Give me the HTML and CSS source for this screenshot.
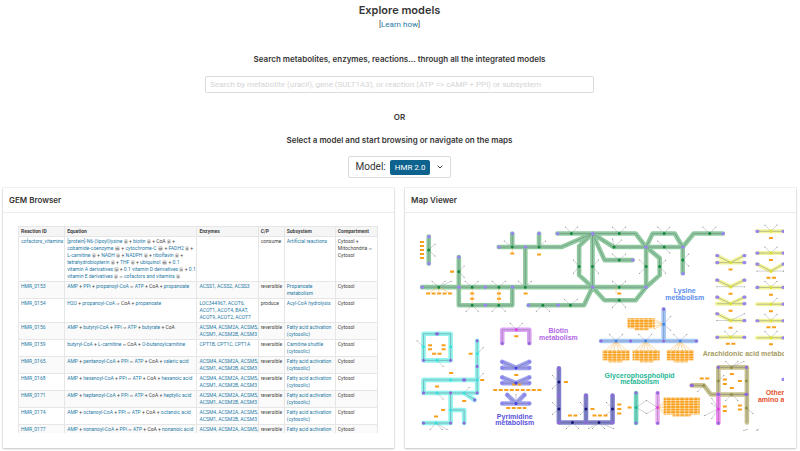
FILE: index.html
```html
<!DOCTYPE html>
<html lang="en">
<head>
<meta charset="utf-8">
<title>Explore models</title>
<link rel="stylesheet" href="styles.css">
</head>
<body>
<main class="page">
  <header class="intro">
    <h1>Explore models</h1>
    <p class="learn">[<a href="#">Learn how</a>]</p>
    <label class="lead" for="search">Search metabolites, enzymes, reactions... through all the integrated models</label>
    <input class="search" id="search" type="text" placeholder="Search by metabolite (uracil), gene (SULT1A3), or reaction (ATP =&gt; cAMP + PPi) or subsystem">
    <p class="or">OR</p>
    <p class="select-text">Select a model and start browsing or navigate on the maps</p>
    <button class="model" type="button" aria-haspopup="listbox">
      <span>Model:</span><span class="tag">HMR 2.0</span>
      <svg class="chevron" viewBox="0 0 6 4" aria-hidden="true"><path d="M.7.7 3 3 5.3.7"/></svg>
    </button>
  </header>

  <div class="cards">
    <section class="card">
      <h2>GEM Browser</h2>
      <div class="table-view">
        <table>
          <colgroup><col class="c-id"><col class="c-eq"><col class="c-enz"><col class="c-cp"><col class="c-sub"><col class="c-comp"></colgroup>
          <thead><tr><th>Reaction ID</th><th>Equation</th><th>Enzymes</th><th>C/P</th><th>Subsystem</th><th>Compartment</th></tr></thead>
          <tbody>
            <tr><td><a href="#">cofactors_vitamins</a></td><td><a href="#">[protein]-N6-(lipoyl)lysine</a> <i>c</i> + <a href="#">biotin</a> <i>c</i> + CoA <i>c</i> +<br><a href="#">cobamide-coenzyme</a> <i>m</i> + <a href="#">cytochrome-C</a> <i>m</i> + <a href="#">FADH2</a> <i>c</i> +<br><a href="#">L-carnitine</a> <i>c</i> + <a href="#">NADH</a> <i>c</i> + <a href="#">NADPH</a> <i>c</i> + <a href="#">riboflavin</a> <i>c</i> +<br><a href="#">tetrahydrobiopterin</a> <i>c</i> + <a href="#">THF</a> <i>c</i> + <a href="#">ubiquinol</a> <i>m</i> + <a href="#">0.1<br>vitamin A derivatives</a> <i>c</i> + <a href="#">0.1 vitamin D derivatives</a> <i>c</i> + <a href="#">0.1<br>vitamin E derivatives</a> <i>c</i> <b>⇒</b> <a href="#">cofactors and vitamins</a> <i>c</i></td><td></td><td>consume</td><td><a href="#">Artificial reactions</a></td><td>Cytosol +<br>Mitochondria <b>⇒</b><br>Cytosol</td></tr>
            <tr><td><a href="#">HMR_0153</a></td><td><a href="#">AMP</a> + <a href="#">PPi</a> + <a href="#">propanoyl-CoA</a> <b>⇔</b> <a href="#">ATP</a> + CoA + <a href="#">propanoate</a></td><td><a href="#">ACSS1, ACSS2, ACSS3</a></td><td>reversible</td><td><a href="#">Propanoate<br>metabolism</a></td><td>Cytosol</td></tr>
            <tr><td><a href="#">HMR_0154</a></td><td><a href="#">H2O</a> + <a href="#">propanoyl-CoA</a> <b>⇒</b> CoA + <a href="#">propanoate</a></td><td><a href="#">LOC344967, ACOT6,<br>ACOT1, ACOT4, BAAT,<br>ACOT9, ACOT2, ACOT7</a></td><td>produce</td><td><a href="#">Acyl-CoA hydrolysis</a></td><td>Cytosol</td></tr>
            <tr><td><a href="#">HMR_0156</a></td><td><a href="#">AMP</a> + <a href="#">butyryl-CoA</a> + <a href="#">PPi</a> <b>⇔</b> <a href="#">ATP</a> + <a href="#">butyrate</a> + CoA</td><td><a href="#">ACSM4, ACSM2A, ACSM5,<br>ACSM1, ACSM2B, ACSM3</a></td><td>reversible</td><td><a href="#">Fatty acid activation<br>(cytosolic)</a></td><td>Cytosol</td></tr>
            <tr><td><a href="#">HMR_0159</a></td><td><a href="#">butyryl-CoA</a> + <a href="#">L-carnitine</a> <b>⇔</b> CoA + <a href="#">O-butanoylcarnitine</a></td><td><a href="#">CPT1B, CPT1C, CPT1A</a></td><td>reversible</td><td><a href="#">Carnitine shuttle<br>(cytosolic)</a></td><td>Cytosol</td></tr>
            <tr><td><a href="#">HMR_0165</a></td><td><a href="#">AMP</a> + <a href="#">pentanoyl-CoA</a> + <a href="#">PPi</a> <b>⇔</b> <a href="#">ATP</a> + CoA + <a href="#">valeric acid</a></td><td><a href="#">ACSM4, ACSM2A, ACSM5,<br>ACSM1, ACSM2B, ACSM3</a></td><td>reversible</td><td><a href="#">Fatty acid activation<br>(cytosolic)</a></td><td>Cytosol</td></tr>
            <tr><td><a href="#">HMR_0168</a></td><td><a href="#">AMP</a> + <a href="#">hexanoyl-CoA</a> + <a href="#">PPi</a> <b>⇔</b> <a href="#">ATP</a> + CoA + <a href="#">hexanoic acid</a></td><td><a href="#">ACSM4, ACSM2A, ACSM5,<br>ACSM1, ACSM2B, ACSM3</a></td><td>reversible</td><td><a href="#">Fatty acid activation<br>(cytosolic)</a></td><td>Cytosol</td></tr>
            <tr><td><a href="#">HMR_0171</a></td><td><a href="#">AMP</a> + <a href="#">heptanoyl-CoA</a> + <a href="#">PPi</a> <b>⇔</b> <a href="#">ATP</a> + CoA + <a href="#">heptylic acid</a></td><td><a href="#">ACSM4, ACSM2A, ACSM5,<br>ACSM1, ACSM2B, ACSM3</a></td><td>reversible</td><td><a href="#">Fatty acid activation<br>(cytosolic)</a></td><td>Cytosol</td></tr>
            <tr><td><a href="#">HMR_0174</a></td><td><a href="#">AMP</a> + <a href="#">octanoyl-CoA</a> + <a href="#">PPi</a> <b>⇔</b> <a href="#">ATP</a> + CoA + <a href="#">octanoic acid</a></td><td><a href="#">ACSM4, ACSM2A, ACSM5,<br>ACSM1, ACSM2B, ACSM3</a></td><td>reversible</td><td><a href="#">Fatty acid activation<br>(cytosolic)</a></td><td>Cytosol</td></tr>
            <tr><td><a href="#">HMR_0177</a></td><td><a href="#">AMP</a> + <a href="#">nonanoyl-CoA</a> + <a href="#">PPi</a> <b>⇔</b> <a href="#">ATP</a> + CoA + <a href="#">nonanoic acid</a></td><td><a href="#">ACSM4, ACSM2A, ACSM5,</a></td><td>reversible</td><td><a href="#">Fatty acid activation</a></td><td>Cytosol</td></tr>
          </tbody>
        </table>
      </div>
    </section>

    <section class="card">
      <h2>Map Viewer</h2>
      <div class="map-view">
      <svg class="map" viewBox="413 224 370 206" role="img" aria-label="Metabolic map">
        <defs>
          <marker id="dot" markerUnits="userSpaceOnUse" markerWidth="2" markerHeight="2" refX="1" refY="1"><circle cx="1" cy="1" r=".5" fill="#777"/></marker>
          <pattern id="genes" patternUnits="userSpaceOnUse" width="4.5" height="2.6"><rect width="4.1" height="2.1" rx=".4" fill="#f8a01c"/></pattern>
          <path id="p-green" d="M428.7 236.5V263.5M422 287H645.5M458.7 257V305H512V287M525 287V247M498.5 247H561L592 233.5M512 233.5V247M538.7 233.5V247M557 233.5H635L645.5 247M592 233.5 578.7 246V275L592 287M592 233.5V287M592 233.5 604 260H632M592 233.5 613 247H682M645.5 247 652 233.5H674L682 247 693 233.5H722M682 247V273M645.5 247V287M645.5 247 659 258V275L645.5 287M592 287 604 300H635L645.5 287M528.3 305H583.5L592 287"/>
          <path id="p-yellow" d="M716 255.5 729.7 262.5 743.5 255.5M716 262.5H743.5M716 280 729.7 286.5 743.5 280M716 297 729.7 303.5 743.5 297M716 303.5H743.5M716 313.5 729.7 320.3H743.5M716 337H743.5M756 231.3H782.5M756 253H782.5M756 264 770 271 782.5 264M756 287.3H782.5M756 304H782.5M756 320.5H782.5M756 337.5H782.5"/>
          <path id="p-cyan" d="M423.5 333.5H450.5V360H423.5ZM477 340.5V392.5H423.5V379.5H477M464 392.5 474.5 399.5M450.5 392.5V422.5H423.5M450.5 409.5H464V422.5"/>
          <path id="p-biotin" d="M502 343V329.5H529V343"/>
          <path id="p-pyr" d="M502 361.5 515.7 367.5 529 361.5M502 367.5H529M502 377 515.7 382.7 529 377M502 382.7H529M507 394.5 515.7 403 524 394.5M502 403H529"/>
          <path id="p-navy" d="M558.5 368V422H612V395M585.5 395V422"/>
          <path id="p-blue" d="M600.5 340.7H695.5M663 309V340.7"/>
          <path id="p-teal" d="M635.5 392.5V422.5"/>
          <path id="p-pink" d="M657 392.5V422.5"/>
          <path id="p-olive" d="M717.5 394V367H746V422M691 385H703L710 394H746"/>
          <path id="p-magenta" d="M717.5 394V422.5"/>
        </defs>

        <use href="#p-green" class="band green"/><use href="#p-yellow" class="band yellow"/><use href="#p-cyan" class="band cyan"/><use href="#p-biotin" class="band biotin"/><use href="#p-pyr" class="band pyr"/><use href="#p-navy" class="band navy"/><use href="#p-blue" class="band blue"/><use href="#p-teal" class="band teal"/><use href="#p-pink" class="band pink"/><use href="#p-olive" class="band olive"/><use href="#p-magenta" class="band magenta"/>
        <g class="core"><use href="#p-green"/><use href="#p-yellow"/><use href="#p-cyan"/><use href="#p-biotin"/><use href="#p-pyr"/><use href="#p-navy"/><use href="#p-blue"/><use href="#p-teal"/><use href="#p-pink"/><use href="#p-olive"/><use href="#p-magenta"/></g>

        <!-- side metabolites -->
        <path class="side" d="M435 244 428.7 250 435 256M432 281 438.7 287 445 281M438.7 287 451 281M465 281 472 287 478 281M492 281 498.7 287 505 281M518 281 525 287 531 281M464 266 458.7 271.5 464 277M466 311 472 305 478 311M492 311 498.5 305 505 311M504 241 512 247M538.7 247 545 241M565 227 571 233.5 577 227M612 227 618.7 233.5 625 227M657 227 663.5 233.5 669 227M702 227 709 233.5 715 227M613.5 247 612 239M613.5 247 621 240M612 254 618.7 260 625 254M573 260 578.7 266.5 573 273M598 260 592 266.5 598 273M639 260 645.5 266.5 639 273M665 260 659 266.5 665 273M663.5 247 669 253M663.5 247 657 241M688 254 682 260 688 266M612 281 618.7 287 625 281M612 307 618.7 300 625 307M536 311 542.5 305 549 311M564 299 570 305 577 299"/>
        <path class="side" d="M716 286.5H743.5M716 320.3H729.7L743.5 313.5M756 271H782.5M724 331 729.7 337 736 331M764 225 770 231.3 776 225M764 247 770 253 776 247M764 281 770 287.3 776 281M770 304 776 298M764 314 770 320.5 776 314M764 331 770 337.5 776 331"/>
        <path class="side" d="M417 340.5 423.5 346.5M437 360 443 366M477 353.5 483 347.5M477 379.5 483 373M437 392.5 443 398.5M464 392.5 469 387M430 429 436 422.5 442 429M436 422.5 447 429M510 323 516 329.5 522 323M515.7 403V394M552 375 558.5 381.5 552 388M552 402 558.5 408.5 552 414M580 402 585.5 408.5 580 414M606 402 612 408.5 606 414M566 428 572 422 578 428M588 428 598.5 422 592 428M604 428 598.5 422 613 428M609 334 615.5 340.7 622 334M638 334 645 340.7 651 334M673 334 679.5 340.7 686 334M670 316 663 324 670 330M635.5 407 646 400 657 407 646 413 635.5 407M725 361 730.7 367 743 361M730.7 367 737 361M697 391 703 385M723 375 717.5 380.5M725 400 730.7 394 737 400M711 398 717.5 408.5 711 403M704 415 717.5 408.5 711 418M752 413 745.5 407.5M743 430 746 429M756 430 757 429"/>

        <!-- gene boxes -->
        <g class="fan"><path d="M615.5 341 604 351M615.5 341 609 351M615.5 341 613 351M615.5 341 618 351M615.5 341 622 351M615.5 341 627 351M645 341 634 351M645 341 639 351M645 341 643 351M645 341 648 351M645 341 652 351M645 341 657 351M679.5 341 668 351M679.5 341 673 351M679.5 341 677 351M679.5 341 682 351M679.5 341 686 351M679.5 341 691 351M663 324 653 319M663 324 653 322M663 324 653 326M663 324 653 329M657 407 665 399M657 407 665 403M657 407 665 407M657 407 665 411M657 407 665 415M438.7 287 428 293M438.7 287V293M438.7 287 450 293M512 247V253M472 287V305M498.7 287V305M615.5 287V293"/></g>
        <g fill="url(#genes)"><rect x="602" y="350" width="27" height="10"/><rect x="608" y="360" width="14" height="2"/><rect x="632" y="350" width="27" height="10"/><rect x="639" y="360" width="14" height="2"/><rect x="666" y="350" width="27" height="10"/><rect x="673" y="360" width="14" height="2"/><rect x="627" y="318" width="27" height="10"/><rect x="634" y="328" width="14" height="2"/><rect x="663" y="397" width="36" height="17"/><rect x="672" y="414" width="18" height="2"/></g>
        <path class="gene" d="M420 242h4M420 246h4M420 250h4M420 254h4M420 258h4M426 293.3h26M450 271.5h4M470 293.3h4M470 298.5h4M496.7 293.3h4M496.7 298.5h4M510 253.5h4M523.3 293.3h4M536.7 254.3h4M616.7 293.3h4M727.7 269.5h4M727.7 293.5h4M727.7 310.5h4M727.7 327.5h4M725 343.5h9.5M768 238h4M768 260h4M765.5 277.5h9.5M768 294.5h4M768 311h4M765.5 327h9.5M768 344h4"/>
        <path class="gene" d="M428 345h4M428 349h4M441.5 345h4M441.5 349h4M432 353.5h9.5M468.5 353.5h4M449 372.7h4M480 379.5h4M435 386h4M462 400.5h4M441 409.5h4M434 416h4M514 336h4M514 374.5h4M512 384h9M493 389.5h49M506 407.5h20M563.5 381.5h4M590 408.5h4M567.5 415h9.5M592 415h15M616.7 404h4M616.7 408.5h4M616.7 413h4M627 407h4M729 373.5h4M722 379h4M722 383.5h4M737 380.5h4M729 387.5h4M699 378h9.5M722 406h4M722 410.5h4M737 405h4M737 409h4"/>

        <!-- reaction hubs -->
        <path class="hub h-green" d="M428.7 250h0M438.7 287h0M472 287h0M498.7 287h0M525 287h0M458.7 271.5h0M472 305h0M498.5 305h0M512 247h0M538.7 247h0M571 233.5h0M618.7 233.5h0M613.5 247h0M618.7 260h0M578.7 266.5h0M592 266.5h0M645.5 266.5h0M659 266.5h0M618.7 287h0M618.7 300h0M663.5 233.5h0M663.5 247h0M709 233.5h0M682 260h0M542.5 305h0M570 305h0"/>
        <path class="hub h-yellow" d="M729.7 262.5h0M729.7 286.5h0M729.7 303.5h0M729.7 320.3h0M729.7 337h0M770 231.3h0M770 253h0M770 271h0M770 287.3h0M770 304h0M770 320.5h0M770 337.5h0"/>
        <path class="hub h-cyan" d="M423.5 346.5h0M450.5 346.5h0M437 360h0M477 353.5h0M450.5 379.5h0M477 379.5h0M437 392.5h0M464 392.5h0M450.5 409.5h0M436 422.5h0"/>
        <path class="hub h-navy" d="M558.5 381.5h0M558.5 408.5h0M585.5 408.5h0M612 408.5h0M572 422h0M598.5 422h0"/>
        <path class="hub h-pyr" d="M515.7 367.5h0M515.7 382.7h0M515.7 403h0"/>
        <path class="hub h-blue" d="M615.5 340.7h0M645 340.7h0M679.5 340.7h0M663 324h0"/>
        <path class="hub h-olive" d="M730.7 367h0M717.5 380.5h0M745.5 380.5h0M730.7 394h0M703 385h0M745.5 407.5h0"/>
        <path class="hub h-teal" d="M635.5 407h0"/>
        <path class="hub h-pink" d="M516 329.5h0M657 407h0M717.5 408.5h0"/>

        <!-- metabolites -->
        <path class="node" d="M428.7 236.5h.5M428.7 263.5h.5M422 287h.5M458.5 287h.5M485 287h.5M512 287h.5M458.5 257h.5M485 305h.5M498.5 247h.5M525 247h.5M512 233.5h.5M538.5 233.5h.5M557 233.5h.5M592 233.5h.5M592 287h.5M645 247h.5M645 287h.5M632 260h.5M682 247h.5M722 233.5h.5M682 273.5h.5M528 305h.5M557.5 305h.5M716 255.5h1M743 255.5h1M716 262.5h1M743 262.5h1M716 280h1M743 280h1M716 297h1M743 297h1M743 303.5h1M716 313.5h1M743 320.3h1M716 337h1M743 337h1M756 231.3h1M782 231.3h1M756 253h1M782 253h1M756 264h1M782 264h1M756 287.3h1M782 287.3h1M782 304h1M756 320.5h1M782 320.5h1M782 337.5h1M782 379h1"/>
        <path class="node deep" d="M436.5 333.5h1M423.5 360h0M450.5 360h0M477 340.5h0M477 366h0M463.5 379.5h1M423.5 392.5h0M450.5 392.5h0M477 392.5h0M474.5 399.5h0M423.5 422.5h0M450.5 422.5h0M464 422.5h0M502 343h0M529 343h0M558.5 368h0M558.5 395h0M585.5 395h0M612 395h0M558.5 422h0M585.5 422h0M612 422h0M600.5 340.7h0M630 340.7h0M663 340.7h0M695.5 340.7h0M663 309h0M635.5 392.5h0M635.5 422.5h0M657 392.5h0M657 422.5h0M717.5 367h0M745.5 367h0M717 394h1M745 394h1M690.5 385h1M717.5 422.5h0"/>
        <path class="node pyr-node" d="M502 361.5h0M529 361.5h0M502 367.5h0M529 367.5h0M502 377h0M529 377h0M502 382.7h0M529 382.7h0M507 394.5h0M524 394.5h0M502 403h0M529 403h0"/>

        <g class="names">
          <text x="684" y="293" fill="#5b8def">Lysine</text><text x="684" y="299.5" fill="#5b8def">metabolism</text>
          <text x="558" y="333" fill="#b267e6">Biotin</text><text x="558" y="340" fill="#b267e6">metabolism</text>
          <text x="514.5" y="418" fill="#5952dc">Pyrimidine</text><text x="514.5" y="424.5" fill="#5952dc">metabolism</text>
          <text x="639" y="377.5" fill="#26b896">Glycerophospholipid</text><text x="639" y="384" fill="#26b896">metabolism</text>
          <text x="774" y="395" fill="#e5532d">Other</text>
          <g class="cut"><text x="702" y="356" fill="#a79c63">Arachidonic acid metabo</text><text x="757" y="402" fill="#e5532d">amino a</text></g>
        </g>
      </svg>
      </div>
    </section>
  </div>
</main>
</body>
</html>
```

FILE: styles.css
```css
* { box-sizing: border-box; }
body { margin: 0; background: #fff; color: #363636; font-family: Inter, "Liberation Sans", sans-serif; font-size: 8px; line-height: 12px; }
h1, h2, p { margin: 0; }
a { color: #1f7aa5; text-decoration: none; }

.page { padding: 2px 4px 5px 3px; }
.intro { display: flex; flex-direction: column; align-items: center; }
h1 { font-size: 11px; line-height: 16px; font-weight: 600; }
.learn { margin-top: 1px; color: #4a4a4a; font-family: Roboto, sans-serif; }
.lead { margin-top: 22px; font-weight: 600; }
.search { width: 49%; height: 17px; margin-top: 11px; padding: 0 4px; border: 1px solid #dbdbdb; border-radius: 2px; font: 8px/12px Roboto, sans-serif; color: #363636; background: #fff; }
.search::placeholder { color: #d4d4d4; opacity: 1; }
.or { margin-top: 18px; font-weight: 600; }
.select-text { margin-top: 11px; font-weight: 600; }
.model { display: flex; align-items: center; gap: 4px; margin-top: 10px; height: 22px; padding: 0 7px; border: 1px solid #dbdbdb; border-radius: 2px; background: #fff; font: 10px/12px Roboto, sans-serif; color: #363636; }
.tag { padding: 0 5px; border-radius: 2px; background: #0e638e; color: #fff; font-size: 8px; line-height: 15px; }
.chevron { width: 6px; height: 4px; margin-left: 3px; fill: none; stroke: #444; stroke-width: 1; }

.cards { display: grid; grid-template-columns: minmax(0, 1fr) minmax(0, 1fr); gap: 11px; margin-top: 10px; }
.card { background: #fff; box-shadow: 0 1px 2px rgba(10, 10, 10, .2), 0 0 0 1px rgba(10, 10, 10, .05); }
h2 { padding: 6px; border-bottom: 1px solid #ececec; font-size: 8px; line-height: 12px; font-weight: 600; }

.table-view { margin: 13px 16px 15px 15px; }
table { width: 100%; table-layout: fixed; border-collapse: collapse; font-family: Roboto, "Open Sans", sans-serif; font-size: 5px; line-height: 7px; color: #444; }
th, td { padding: 1px 2px; border: 1px solid #e6e6e6; text-align: left; vertical-align: top; white-space: nowrap; }
th { background: #f5f5f5; font-weight: 700; }
tbody tr:nth-child(even) { background: #fafafa; }
tbody tr:last-child td { padding-bottom: 0; border-bottom: 0; }
.c-id { width: 46px; }
.c-eq { width: 132px; }
.c-enz { width: 61px; }
.c-cp { width: 26px; }
.c-sub { width: 51px; }
.c-comp { width: 42px; }
td i { padding: 0 1px; border-radius: 2px; background: #d6d6d6; font-style: normal; font-size: 4px; }
td b { font-size: 4px; font-family: "DejaVu Sans", sans-serif; font-weight: 400; line-height: 1; }

.map-view { padding: 11px 12px 15px 8px; }
.map { display: block; width: 100%; overflow: hidden; }
.band { fill: none; stroke-width: 4.6; stroke-linecap: round; stroke-linejoin: round; }
.green { stroke: #8fca9f; }
.yellow { stroke: #f3f59a; stroke-width: 4; }
.cyan { stroke: #91f3ed; }
.biotin { stroke: #dda3f5; }
.pyr { stroke: #a0a0f0; }
.navy { stroke: #8080cd; }
.blue { stroke: #a7c9fa; }
.teal { stroke: #6fdcc1; }
.pink { stroke: #eeb0f4; }
.olive { stroke: #c8c38f; }
.magenta { stroke: #f28af0; }
.core { fill: none; stroke: #555b6b; stroke-width: .6; opacity: .6; }
.side { fill: none; stroke: #8d8fa0; stroke-width: .4; marker-start: url(#dot); marker-end: url(#dot); marker-mid: url(#dot); }
.fan path { fill: none; stroke: #f8b54f; stroke-width: .5; }
.gene { fill: none; stroke: #f8a01c; stroke-width: 2; stroke-dasharray: 4 1.5; }
.hub { fill: none; stroke-width: 3; stroke-linecap: round; }
.h-green { stroke: #14883d; }
.h-yellow { stroke: #dcde3a; }
.h-cyan { stroke: #36e0dc; }
.h-navy { stroke: #161675; }
.h-pyr { stroke: #4040e0; }
.h-blue { stroke: #3e86ee; }
.h-olive { stroke: #958c47; }
.h-teal { stroke: #1ab890; }
.h-pink { stroke: #e33fe0; }
.node { fill: none; stroke: #9a86f2; stroke-width: 3.2; stroke-linecap: round; }
.deep { stroke: #9069dc; }
.pyr-node { stroke: #8a83ee; }
.names { font-family: "Liberation Sans", Arial, sans-serif; font-size: 7px; font-weight: 700; text-anchor: middle; }
.cut { text-anchor: start; }
```
